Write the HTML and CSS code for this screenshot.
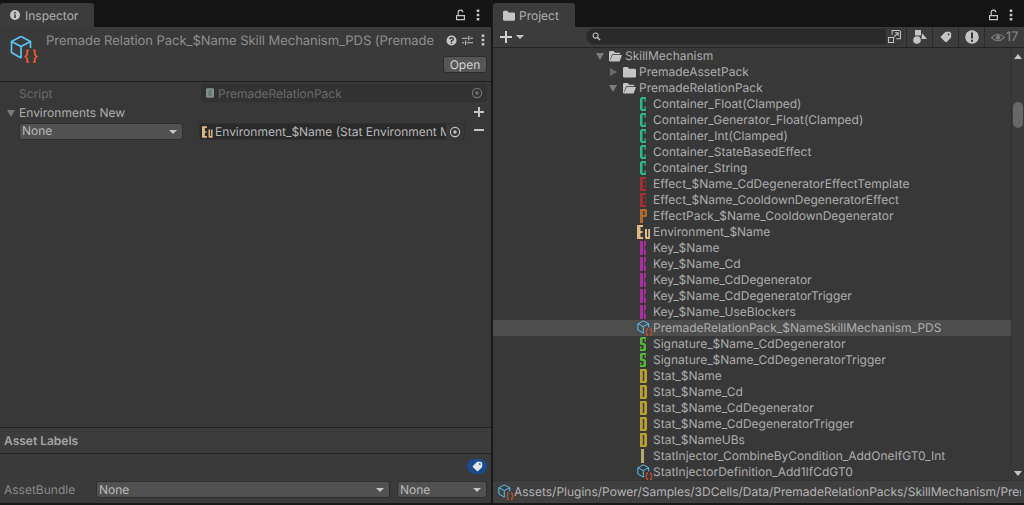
FILE: index.html
```html
<!DOCTYPE html>
<html lang="en">
<head>
<meta charset="utf-8">
<title>Unity Inspector and Project</title>
<link rel="stylesheet" href="styles.css">
</head>
<body>
<svg class="defs" aria-hidden="true">
  <symbol id="cube" viewBox="0 0 28 28">
    <g fill="none" stroke="#5cc3f2" stroke-width="1.7" stroke-linejoin="round">
      <path d="M11 1.500 20.500 6.500V13M11 1.500 1.500 6.500V17.500L11 23M1.500 6.500 11 11.500 20.500 6.500M11 11.500V23"/>
    </g>
    <g fill="none" stroke="#f4592b" stroke-width="1.700">
      <path d="M19 15.500H17.200V19.500L15.300 21.500 17.200 23.500V27H19"/>
      <path d="M23 15.500H24.800V19.500L26.700 21.500 24.800 23.500V27H23"/>
    </g>
  </symbol>
  <symbol id="folder" viewBox="0 0 14 12"><path fill="#c4c4c4" d="M0 1.500 1 .5H5L6.500 2.500H13L14 3.500V11L13 12H1L0 11Z"/></symbol>
  <symbol id="folder-open" viewBox="0 0 14 12"><path fill="#c4c4c4" d="M0 1.500 1 .5H5L6.500 2.500H12V4H3.500L1 10V11L4 5H14L11.500 12H1L0 11Z"/></symbol>
  <symbol id="lock" viewBox="0 0 12 12"><path fill="none" stroke="#c4c4c4" stroke-width="1.200" d="M1.600 6.600H9.400V10.600H1.600ZM3.200 6.400V3.200Q3.200 1.100 5.500 1.100 7.800 1.100 7.800 3.200"/></symbol>
  <symbol id="dots" viewBox="0 0 4 12"><path fill="#c4c4c4" d="M.7.5H3.300V3H.7ZM.7 4.800H3.300V7.300H.7ZM.7 9H3.300V11.500H.7Z"/></symbol>
  <symbol id="target" viewBox="0 0 12 12"><circle cx="6" cy="6" r="4.600" fill="none" stroke="currentColor" stroke-width="1.100"/><circle cx="6" cy="6" r="1.700" fill="currentColor"/></symbol>
  <symbol id="tag" viewBox="0 0 14 14"><path fill="currentColor" d="M1 6.500 6.500 1H11.500L13 2.500V7.500L7.500 13H6.500L1 7.500ZM10 3A1 1 0 1 0 10.010 3Z"/></symbol>
  <symbol id="g-c" viewBox="0 0 16 16"><path fill="currentColor" d="M3 2H4V1H9V3H5.500V13H9V15H4V14H3ZM7.500 3.500H9V5.500H7.500ZM7.500 10.500H9V12.500H7.500Z"/></symbol>
  <symbol id="g-e" viewBox="0 0 16 16"><path fill="currentColor" d="M3 1H9V3H6V13H9V15H3ZM7.500 5H9V7H7.500ZM7.500 9H9V11H7.500Z"/></symbol>
  <symbol id="g-p" viewBox="0 0 16 16"><path fill="currentColor" d="M3 1H9L10 2V8L9 9H6V15H3ZM6 3V7H7.500V3Z"/></symbol>
  <symbol id="g-eu" viewBox="0 0 16 16"><path fill="currentColor" d="M0 1H6V3H3.500V7H5.500V9H3.500V13H6V15H0ZM8 5H10V13H11.200V5H13V15H9L8 14Z"/></symbol>
  <symbol id="g-k" viewBox="0 0 16 16"><path fill="currentColor" d="M3 1H6V15H3ZM7 1H9V6H8V8.500H6.500V7.500H7ZM6.500 9H8V10H9V15H7V11H6.500Z"/></symbol>
  <symbol id="g-s" viewBox="0 0 16 16"><path fill="currentColor" d="M4 1H9V3H5.500V7H8V8H9V14L8 15H3V13H6.500V9H4L3 8V2ZM7.500 3.500H9V5.500H7.500ZM3 10.500H4.500V12.500H3Z"/></symbol>
  <symbol id="g-d" viewBox="0 0 16 16"><path fill="currentColor" d="M3 1H9L10 2V14L9 15H3ZM5.800 3V13H7.200V3Z"/></symbol>
  <symbol id="g-i" viewBox="0 0 16 16"><path fill="currentColor" d="M4 1H7V15H4Z"/></symbol>
</svg>

<main class="layout">
  <section class="panel inspector">
    <header class="tabbar">
      <div class="tab tab-inspector">
        <svg class="tab-info" viewBox="0 0 10 10"><circle cx="5" cy="5" r="5" fill="#c4c4c4"/><path fill="#3c3c3c" d="M4.200 2H5.800V3.400H4.200ZM4.200 4.300H5.800V8H4.200Z"/></svg>
        <span>Inspector</span>
      </div>
      <div class="tab-tools">
        <svg class="ico-lock"><use href="#lock"/></svg>
        <svg class="ico-dots"><use href="#dots"/></svg>
      </div>
    </header>

    <div class="asset-head">
      <svg class="asset-icon"><use href="#cube"/></svg>
      <div class="asset-main">
        <div class="asset-title-row">
          <div class="asset-title">Premade Relation Pack_$Name Skill Mechanism_PDS (Premade Relation Pack)</div>
          <div class="asset-tools">
            <svg class="ico-help" viewBox="0 0 12 12"><circle cx="6" cy="6" r="5.500" fill="#c4c4c4"/><path fill="none" stroke="#383838" stroke-width="1.500" d="M4 4.700Q4 3 6 3 8 3 8 4.500 8 5.500 6 6.300V7.500"/><path fill="#383838" d="M5.200 8.300H6.800V9.700H5.200Z"/></svg>
            <svg class="ico-sliders" viewBox="0 0 12 12"><path fill="none" stroke="#c4c4c4" stroke-width="1.200" d="M0 3.500H6M9 3.500H12M7.500 1V6M0 8.500H2.500M5.500 8.500H12M4 6V11"/></svg>
            <svg class="ico-dots"><use href="#dots"/></svg>
          </div>
        </div>
        <div class="asset-open"><button class="btn-open">Open</button></div>
      </div>
    </div>

    <div class="props">
      <div class="prop-row dim">
        <span class="prop-label">Script</span>
        <div class="field field-script">
          <svg class="ico-script" viewBox="0 0 10 12"><path fill="#83908a" d="M0 1 1 0H9L10 1V11L9 12H1L0 11Z"/><path fill="#465" d="M3 3H7V4H3ZM3 5.500H7V6.500H3ZM3 8H7V9H3Z"/></svg>
          <span class="clip">PremadeRelationPack</span>
          <svg class="ico-target"><use href="#target"/></svg>
        </div>
      </div>
      <div class="prop-row env-head">
        <span class="tri-down"></span>
        <span class="env-label">Environments New</span>
        <span class="list-btn plus"></span>
      </div>
      <div class="prop-row env-item">
        <div class="dropdown dd-env"><span>None</span><i class="arrow"></i></div>
        <div class="field field-env">
          <svg class="ico-env c-eu"><use href="#g-eu"/></svg>
          <span class="clip env-value">Environment_$Name (Stat Environment Modifier)</span>
          <span class="target-wrap"><svg class="ico-target"><use href="#target"/></svg></span>
        </div>
        <span class="list-btn minus"></span>
      </div>
    </div>

    <div class="labels-head">Asset Labels</div>
    <div class="labels-body">
      <div class="tag-row"><span class="tag-pill"><svg><use href="#tag"/></svg></span></div>
      <div class="bundle-row">
        <span class="bundle-label">AssetBundle</span>
        <div class="dropdown dd-bundle"><span>None</span><i class="arrow"></i></div>
        <div class="dropdown dd-variant"><span>None</span><i class="arrow"></i></div>
      </div>
    </div>
  </section>

  <section class="panel project">
    <header class="tabbar">
      <div class="tab tab-project">
        <svg class="tab-folder"><use href="#folder"/></svg>
        <span>Project</span>
      </div>
      <div class="tab-tools">
        <svg class="ico-lock"><use href="#lock"/></svg>
        <svg class="ico-dots"><use href="#dots"/></svg>
      </div>
    </header>

    <div class="toolbar">
      <div class="add-btn"><span class="plus-big"></span><i class="arrow"></i></div>
      <div class="search">
        <svg class="ico-search" viewBox="0 0 10 10"><circle cx="4" cy="4" r="2.800" fill="none" stroke="#c4c4c4" stroke-width="1.200"/><path stroke="#c4c4c4" stroke-width="1.500" d="M6 6 9 9"/></svg>
        <div class="search-input"></div>
        <span class="scene-btn">
          <svg class="ico-scene" viewBox="0 0 14 14"><path fill="none" stroke="#c4c4c4" stroke-width="1.100" d="M4.500 5V.6H13.400V9.500H9M.6 8H6V13.400H.6ZM6.500 7.500 11 3M7.500 3H11V6.500"/></svg>
        </span>
      </div>
      <div class="tool-btn">
        <svg class="ico-shapes" viewBox="0 0 14 14"><path fill="#c4c4c4" d="M2 0H8V5.500H2Z"/><circle cx="4" cy="10" r="3.800" fill="#c4c4c4"/><path fill="#c4c4c4" d="M9 3 14 9H8.500Z"/></svg>
      </div>
      <div class="tool-btn"><svg class="ico-tag"><use href="#tag"/></svg></div>
      <div class="tool-btn">
        <svg class="ico-warn" viewBox="0 0 14 14"><circle cx="7" cy="7" r="6.800" fill="#c4c4c4"/><path fill="#383838" d="M6 2.500H8V8.500H6ZM6 9.700H8V11.700H6Z"/></svg>
      </div>
      <div class="tool-btn tool-count">
        <svg class="ico-eye" viewBox="0 0 14 9"><path fill="none" stroke="#777" stroke-width="1.100" d="M.6 4.500Q7-2 13.400 4.500 7 11 .6 4.500Z"/><circle cx="7" cy="4.300" r="2.400" fill="#777"/></svg>
        <span>17</span>
      </div>
    </div>

    <div class="tree-wrap">
      <ul class="tree">
        <li class="row d1"><span class="tri-down"></span><svg class="ico-folder"><use href="#folder-open"/></svg><span>SkillMechanism</span></li>
        <li class="row d2"><span class="tri-right"></span><svg class="ico-folder"><use href="#folder"/></svg><span>PremadeAssetPack</span></li>
        <li class="row d2"><span class="tri-down"></span><svg class="ico-folder"><use href="#folder-open"/></svg><span>PremadeRelationPack</span></li>
        <li class="row d3"><svg class="ico-glyph c-c"><use href="#g-c"/></svg><span>Container_Float(Clamped)</span></li>
        <li class="row d3"><svg class="ico-glyph c-c"><use href="#g-c"/></svg><span>Container_Generator_Float(Clamped)</span></li>
        <li class="row d3"><svg class="ico-glyph c-c"><use href="#g-c"/></svg><span>Container_Int(Clamped)</span></li>
        <li class="row d3"><svg class="ico-glyph c-c"><use href="#g-c"/></svg><span>Container_StateBasedEffect</span></li>
        <li class="row d3"><svg class="ico-glyph c-c"><use href="#g-c"/></svg><span>Container_String</span></li>
        <li class="row d3"><svg class="ico-glyph c-e"><use href="#g-e"/></svg><span>Effect_$Name_CdDegeneratorEffectTemplate</span></li>
        <li class="row d3"><svg class="ico-glyph c-e"><use href="#g-e"/></svg><span>Effect_$Name_CooldownDegeneratorEffect</span></li>
        <li class="row d3"><svg class="ico-glyph c-p"><use href="#g-p"/></svg><span>EffectPack_$Name_CooldownDegenerator</span></li>
        <li class="row d3"><svg class="ico-glyph c-eu"><use href="#g-eu"/></svg><span>Environment_$Name</span></li>
        <li class="row d3"><svg class="ico-glyph c-k"><use href="#g-k"/></svg><span>Key_$Name</span></li>
        <li class="row d3"><svg class="ico-glyph c-k"><use href="#g-k"/></svg><span>Key_$Name_Cd</span></li>
        <li class="row d3"><svg class="ico-glyph c-k"><use href="#g-k"/></svg><span>Key_$Name_CdDegenerator</span></li>
        <li class="row d3"><svg class="ico-glyph c-k"><use href="#g-k"/></svg><span>Key_$Name_CdDegeneratorTrigger</span></li>
        <li class="row d3"><svg class="ico-glyph c-k"><use href="#g-k"/></svg><span>Key_$Name_UseBlockers</span></li>
        <li class="row d3 selected"><svg class="ico-glyph"><use href="#cube"/></svg><span>PremadeRelationPack_$NameSkillMechanism_PDS</span></li>
        <li class="row d3"><svg class="ico-glyph c-s"><use href="#g-s"/></svg><span>Signature_$Name_CdDegenerator</span></li>
        <li class="row d3"><svg class="ico-glyph c-s"><use href="#g-s"/></svg><span>Signature_$Name_CdDegeneratorTrigger</span></li>
        <li class="row d3"><svg class="ico-glyph c-d"><use href="#g-d"/></svg><span>Stat_$Name</span></li>
        <li class="row d3"><svg class="ico-glyph c-d"><use href="#g-d"/></svg><span>Stat_$Name_Cd</span></li>
        <li class="row d3"><svg class="ico-glyph c-d"><use href="#g-d"/></svg><span>Stat_$Name_CdDegenerator</span></li>
        <li class="row d3"><svg class="ico-glyph c-d"><use href="#g-d"/></svg><span>Stat_$Name_CdDegeneratorTrigger</span></li>
        <li class="row d3"><svg class="ico-glyph c-d"><use href="#g-d"/></svg><span>Stat_$NameUBs</span></li>
        <li class="row d3"><svg class="ico-glyph c-i"><use href="#g-i"/></svg><span>StatInjector_CombineByCondition_AddOneIfGT0_Int</span></li>
        <li class="row d3"><svg class="ico-glyph"><use href="#cube"/></svg><span>StatInjectorDefinition_Add1IfCdGT0</span></li>
      </ul>
      <div class="scrollbar">
        <i class="sb-up"></i>
        <div class="sb-track"><div class="sb-thumb"></div></div>
        <i class="sb-down"></i>
      </div>
    </div>

    <footer class="pathbar">
      <svg class="ico-glyph"><use href="#cube"/></svg>
      <span class="clip">Assets/Plugins/Power/Samples/3DCells/Data/PremadeRelationPacks/SkillMechanism/PremadeRelationPack_$NameSkillMechanism_PDS.asset</span>
    </footer>
  </section>
</main>
</body>
</html>
```

FILE: styles.css
```css
* { box-sizing: border-box; }
html, body { margin: 0; height: 505px; overflow: hidden; }
body {
  background: #191919;
  font-family: Inter, "Liberation Sans", sans-serif;
  font-size: 12px;
  line-height: 16px;
  color: #bdbdbd;
  text-rendering: geometricPrecision;
}
.defs { display: none; }
.layout { display: flex; gap: 2px; height: 503px; }
.panel { display: flex; flex-direction: column; background: #383838; min-width: 0; }
.inspector { width: 491px; flex: none; }
.project { flex: 1; }

.tabbar { display: flex; height: 27px; padding-top: 3px; background: #141414; flex: none; align-items: stretch; justify-content: space-between; }
.tab { display: flex; align-items: center; background: #3c3c3c; border-radius: 3px 3px 0 0; color: #b0b0b0; }
.tab span { padding-top: 2px; }
.tab-inspector { width: 94px; padding-left: 10px; gap: 5px; }
.tab-info { width: 10px; height: 10px; }
.tab-project { width: 82px; padding-left: 10px; gap: 4px; }
.tab-folder { width: 12px; height: 11px; }
.tab-tools { display: flex; align-items: center; gap: 9px; padding-right: 11px; }
.ico-lock { width: 12px; height: 12px; }
.ico-dots { width: 4px; height: 12px; }

.asset-head { display: flex; height: 55px; padding: 6px 4px 0 10px; border-bottom: 1px solid #1f1f1f; background: #3a3a3a; flex: none; }
.asset-icon { width: 28px; height: 28px; margin: 2px 8px 0 0; flex: none; overflow: visible; }
.asset-main { flex: 1; min-width: 0; }
.asset-title-row { display: flex; align-items: center; height: 14px; }
.asset-title { width: 388px; padding-top: 2px; white-space: nowrap; overflow: hidden; font-size: 13px; letter-spacing: -0.04px; color: #8f8f8f; flex: none; }
.asset-tools { display: flex; align-items: center; gap: 5px; margin-left: 12px; }
.asset-tools .ico-dots { margin-left: 3px; }
.ico-help { width: 11px; height: 11px; }
.ico-sliders { width: 11px; height: 11px; }
.asset-open { display: flex; justify-content: flex-end; margin-top: 9px; }
.btn-open { width: 44px; height: 17px; padding: 0; border: 1px solid #2d2d2d; border-radius: 3px; background: #565656; color: #d2d2d2; font: 12px/15px Inter, "Liberation Sans", sans-serif; text-rendering: geometricPrecision; }

.props { flex: 1; padding-top: 2px; }
.prop-row { display: flex; align-items: center; }
.dim { color: #6a6a6a; }
.prop-label { width: 201px; padding: 2px 0 0 19px; flex: none; }
.field { display: flex; align-items: center; background: #2a2a2a; border-radius: 3px; border: 1px solid #303030; min-width: 0; }
.field-script { width: 286px; height: 18px; padding: 0 3px 0 4px; gap: 4px; background: #323232; }
.field-script .clip { padding-top: 2px; }
.ico-script { width: 8px; height: 10px; flex: none; }
.clip { flex: 1; min-width: 0; white-space: nowrap; overflow: hidden; }
.ico-target { width: 12px; height: 12px; flex: none; color: #767676; }
.env-head { margin-top: 3px; height: 16px; padding-left: 7px; color: #aeaeae; }
.env-label { margin-left: 3px; padding-left: 1px; flex: 1; }
.tri-down { width: 0; height: 0; border-style: solid; border-width: 7px 4.5px 0; border-color: #7c7c7c transparent transparent; flex: none; }
.tri-right { width: 0; height: 0; border-style: solid; border-width: 4.5px 0 4.5px 7px; border-color: transparent transparent transparent #6c6c6c; flex: none; }
.list-btn { position: relative; width: 10px; height: 10px; flex: none; margin-right: 7px; }
.list-btn::before { content: ""; position: absolute; left: 0; top: 4px; width: 10px; height: 2px; background: #c4c4c4; }
.plus { margin-bottom: 2px; }
.plus::after { content: ""; position: absolute; left: 4px; top: 0; width: 2px; height: 10px; background: #c4c4c4; }
.minus { margin-bottom: 3px; }
.env-item { margin-top: 2px; height: 17px; padding-left: 19px; }
.dropdown { display: flex; align-items: center; justify-content: space-between; height: 17px; padding: 0 5px 0 2px; background: #515151; border: 1px solid #2f2f2f; border-radius: 3px; color: #bababa; flex: none; }
.arrow { width: 0; height: 0; border-style: solid; border-width: 4px 4px 0; border-color: #c4c4c4 transparent transparent; flex: none; }
.dd-env { width: 164px; }
.dd-env span { padding-bottom: 2px; }
.field-env { width: 271px; height: 17px; margin-left: 16px; margin-right: 9px; background: #2a2a2a; color: #b8b8b8; padding-left: 2px; }
.ico-env { width: 13px; height: 14px; flex: none; }
.env-value { flex: 1; }
.target-wrap { display: flex; align-items: center; justify-content: center; width: 18px; height: 15px; background: #383838; border-radius: 0 3px 3px 0; flex: none; }
.target-wrap .ico-target { color: #c4c4c4; }

.labels-head { height: 27px; padding: 5px 0 0 4px; border-top: 1px solid #232323; border-bottom: 1px solid #232323; background: #3c3c3c; font-weight: 600; color: #a4a4a4; flex: none; }
.labels-body { height: 49px; padding: 5px 4px 0; background: #3a3a3a; flex: none; }
.tag-row { display: flex; justify-content: flex-end; }
.tag-pill { display: flex; align-items: center; justify-content: center; width: 20px; height: 15px; border-radius: 8px; background: #1c4a8e; color: #dfe6f0; }
.tag-pill svg { width: 11px; height: 11px; }
.bundle-row { display: flex; align-items: center; margin-top: 7px; }
.bundle-label { width: 92px; color: #8a8a8a; flex: none; }
.dd-bundle { width: 294px; margin-right: 7px; }
.dd-variant { width: 90px; }

.toolbar { display: flex; height: 21px; align-items: stretch; border-bottom: 1px solid #232323; background: #3c3c3c; flex: none; }
.add-btn { display: flex; align-items: center; width: 93px; padding-left: 7px; gap: 4px; }
.plus-big { position: relative; width: 12px; height: 12px; flex: none; }
.plus-big::before { content: ""; position: absolute; left: 0; top: 5px; width: 12px; height: 2px; background: #d0d0d0; }
.plus-big::after { content: ""; position: absolute; left: 5px; top: 0; width: 2px; height: 12px; background: #d0d0d0; }
.search { display: flex; align-items: center; width: 318px; height: 17px; margin-top: 1px; padding-left: 5px; background: #2a2a2a; border-radius: 8px; border: 1px solid #333; overflow: hidden; }
.ico-search { width: 9px; height: 9px; flex: none; }
.search-input { flex: 1; }
.scene-btn { display: flex; align-items: center; justify-content: center; width: 17px; height: 100%; background: #3a3a3a; flex: none; }
.ico-scene { width: 13px; height: 13px; flex: none; }
.tool-btn { display: flex; align-items: center; justify-content: center; width: 26px; border-left: 1px solid #2b2b2b; }
.search + .tool-btn { margin-left: 2px; }
.ico-shapes { width: 14px; height: 14px; }
.ico-tag { width: 12px; height: 12px; color: #c4c4c4; }
.ico-warn { width: 14px; height: 14px; }
.tool-count { flex: 1; gap: 1px; color: #888; font-size: 13px; }
.ico-eye { width: 14px; height: 9px; }

.tree-wrap { display: flex; flex: 1; min-height: 0; background: #383838; }
.tree { flex: 1; margin: 0; padding: 0; list-style: none; overflow: hidden; }
.row { display: flex; align-items: center; height: 16px; color: #adadad; white-space: nowrap; }
.row.d1 { padding-left: 103px; }
.row.d2 { padding-left: 117px; }
.row.d3 { padding-left: 144px; }
.row .tri-down { border-width: 7px 4px 0; margin-right: 5px; }
.row.d2 .tri-down { margin: 0 6px 0 -1px; }
.row .tri-right { margin-right: 6px; }
.ico-folder { width: 13px; height: 12px; margin-right: 3px; flex: none; }
.ico-glyph { width: 16px; height: 16px; flex: none; }
.selected { background: #4d4d4d; }
.c-c { color: #2fb48c; }
.c-e { color: #a02e2e; }
.c-p { color: #b06a2e; }
.c-eu { color: #dcb985; }
.c-k { color: #a8309a; }
.c-s { color: #58b33a; }
.c-d { color: #b8a030; }
.c-i { color: #b5ab6a; }

.scrollbar { display: flex; flex-direction: column; width: 13px; background: #3a3a3a; border-left: 1px solid #333; flex: none; align-items: center; }
.sb-up { margin-top: 6px; width: 0; height: 0; border-style: solid; border-width: 0 4px 5px; border-color: transparent transparent #c4c4c4; flex: none; }
.sb-down { margin-bottom: 4px; width: 0; height: 0; border-style: solid; border-width: 5px 4px 0; border-color: #c4c4c4 transparent transparent; flex: none; }
.sb-track { flex: 1; width: 100%; padding-top: 43px; display: flex; justify-content: center; }
.sb-thumb { width: 10px; height: 26px; border-radius: 5px; background: #676767; }

.pathbar { display: flex; align-items: center; height: 23px; padding: 0 3px 0 5px; background: #3f3f3f; color: #b4b4b4; flex: none; border-top: 1px solid #333; }
```
